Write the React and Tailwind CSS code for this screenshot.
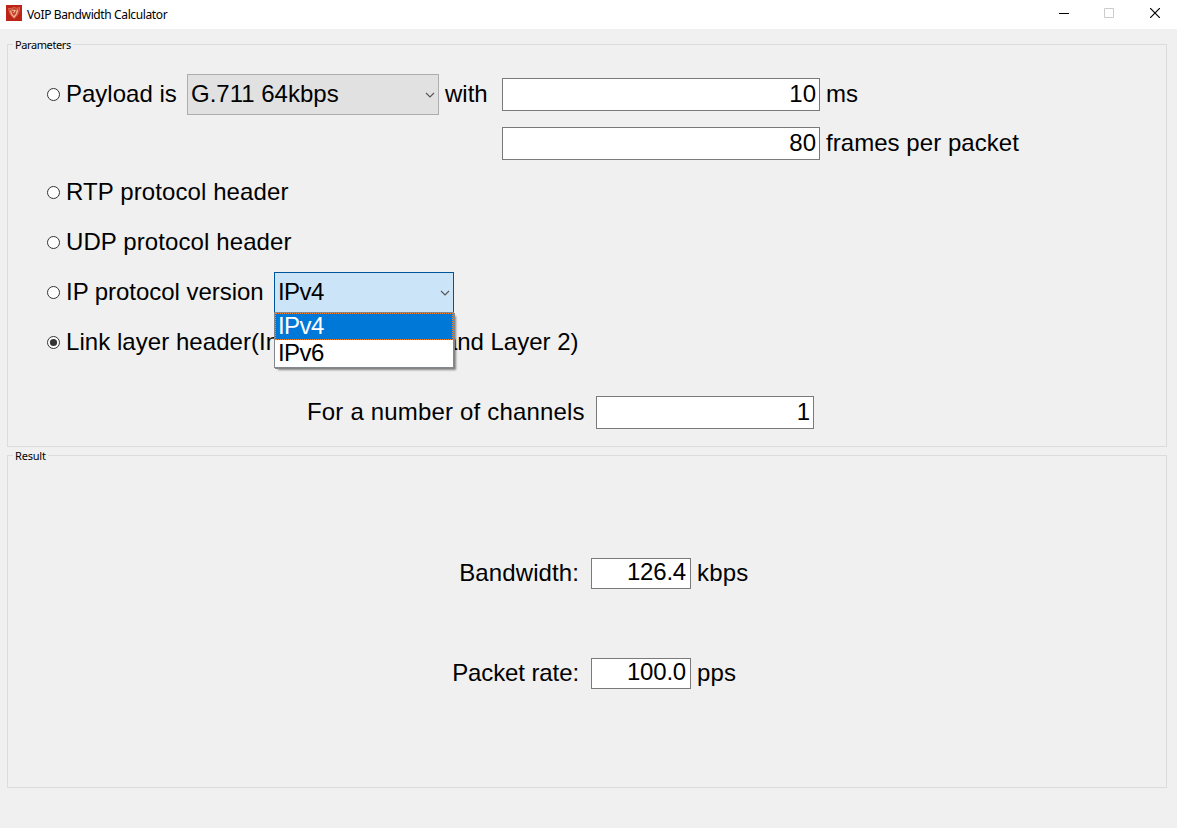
import React from "react";

const Chevron = ({ className = "" }) => (
  <svg className={"h-[6px] w-[10px] shrink-0 " + className} viewBox="0 0 10 6" fill="none" stroke="#555" strokeWidth="1.1">
    <path d="M1 1l4 4 4-4" />
  </svg>
);

const Text = ({ className = "", children }) => (
  <span className={"-mt-[2px] whitespace-nowrap leading-[28px] " + className}>{children}</span>
);

const Radio = ({ checked }) => (
  <svg className="mr-[6px] h-[13px] w-[13px] shrink-0" viewBox="0 0 13 13">
    <circle cx="6.5" cy="6.5" r="6" fill="#fff" stroke="#333" />
    {checked && <circle cx="6.5" cy="6.5" r="3.6" fill="#333" />}
  </svg>
);

const Field = ({ className = "", children }) => (
  <div className={"flex shrink-0 items-start justify-end border border-[#7a7a7a] bg-white " + className}>
    {children}
  </div>
);

const Group = ({ title, titleClass = "", className = "", children }) => (
  <section className={"relative ml-[7px] w-[1160px] border border-[#dcdcdc] " + className}>
    <span className={"absolute -top-[7px] left-[5px] bg-[#f0f0f0] px-[2px] font-['Noto_Sans',sans-serif] text-[11px] leading-[14px] " + titleClass}>
      {title}
    </span>
    {children}
  </section>
);

export default function App() {
  return (
    <div className="flex h-[828px] w-[1177px] flex-col overflow-hidden bg-[#f0f0f0] font-['Liberation_Sans',Arial,sans-serif] text-[24px] text-black">
      <header className="flex h-[29px] shrink-0 items-start bg-white">
        <svg className="mt-[5px] ml-[6px] h-4 w-4" viewBox="0 0 16 16">
          <path fill="#bd2418" d="M0 0h16v16H0z" />
          <path d="M2.500 3.500q3 .5 5.500-1 2.500 1.500 5.500 0 .5 6-5.500 11-5-4-5.500-10z" fill="#c4402c" stroke="#dc7a5c" strokeWidth=".8" />
          <path d="M4.500 5.500q.5 4 3.500 6.500 3-2.500 3.500-7.500" fill="none" stroke="#f3b596" strokeWidth="1.300" />
          <path d="M5.500 5l3.500.5M7.500 8l2-3" fill="none" stroke="#f0c8a4" />
        </svg>
        <span className="mt-[6px] ml-[5px] font-['Noto_Sans',sans-serif] text-[12px] leading-[17px] tracking-[-0.38px]">VoIP Bandwidth Calculator</span>
        <div className="mt-[8px] mr-[17px] ml-auto flex gap-[35px]">
          <svg className="h-[10px] w-[10px]" viewBox="0 0 10 10"><path d="M0 5.500h10" stroke="#000" /></svg>
          <svg className="h-[10px] w-[10px]" viewBox="0 0 10 10"><path d="M.5.5h9v9h-9z" fill="none" stroke="#ccc" /></svg>
          <svg className="ml-px h-[10px] w-[10px]" viewBox="0 0 10 10"><path d="M0 0l10 10M10 0L0 10" stroke="#000" strokeWidth="1.200" /></svg>
        </div>
      </header>

      <Group title="Parameters" titleClass="tracking-[-0.4px]" className="mt-[15px] h-[403px] shrink-0 pl-[39px]">
        <div className="mt-[29px] flex h-[41px] items-center">
          <Radio />
          <Text className="w-[121px]">Payload is</Text>
          <div className="flex h-[41px] w-[252px] items-center border border-[#adadad] bg-[#e1e1e1] pr-[3px] pl-[3px]">
            <Text>G.711 64kbps</Text>
            <Chevron className="ml-auto" />
          </div>
          <Text className="ml-[6px] w-[57px]">with</Text>
          <Field className="h-[33px] w-[318px] pr-[3px] leading-[30px]">10</Field>
          <Text className="ml-[6px]">ms</Text>
        </div>
        <div className="mt-[12px] flex h-[33px] items-center pl-[455px]">
          <Field className="h-[33px] w-[318px] pr-[3px] leading-[30px]">80</Field>
          <Text className="ml-[6px] tracking-[0.05px]">frames per packet</Text>
        </div>
        <div className="mt-[12px] flex h-[41px] items-center">
          <Radio />
          <Text className="tracking-[0.1px]">RTP protocol header</Text>
        </div>
        <div className="mt-[9px] flex h-[41px] items-center">
          <Radio />
          <Text className="tracking-[0.1px]">UDP protocol header</Text>
        </div>
        <div className="mt-[9px] flex h-[41px] items-center">
          <Radio />
          <Text className="w-[208px] tracking-[-0.04px]">IP protocol version</Text>
          <div className="relative flex h-[41px] w-[180px] items-center border border-[#005499] bg-[#cce4f7] pr-[3px] pl-[3px]">
            <Text className="tracking-[-0.6px]">IPv4</Text>
            <Chevron className="ml-auto" />
            <div className="absolute top-[39px] -left-px z-10 w-[180px] border border-[#83878e] bg-white tracking-[-0.6px] shadow-[1px_1px_0_#858585,3px_3px_2px_-1px_rgba(0,0,0,0.45)]">
              <div className="h-[27px] border border-dotted border-[#ff8728] bg-[#0078d7] pl-[2px] leading-[23px] text-white">IPv4</div>
              <div className="h-[27px] pl-[3px] leading-[25px]">IPv6</div>
            </div>
          </div>
        </div>
        <div className="mt-[9px] flex h-[41px] items-center">
          <Radio checked />
          <Text>
            <span className="tracking-[0.05px]">Link layer header(In</span>
            <span className="tracking-[-0.28px]">cluding Layer 1 a</span>
            <span>nd Layer 2)</span>
          </Text>
        </div>
        <div className="mt-[33px] flex h-[33px] items-center pl-[260px]">
          <Text className="w-[289px] tracking-[0.18px]">For a number of channels</Text>
          <Field className="h-[33px] w-[218px] pr-[3px] leading-[30px]">1</Field>
        </div>
      </Group>

      <Group title="Result" titleClass="tracking-[-0.2px]" className="mt-[8px] h-[333px] shrink-0">
        <div className="mt-[102px] flex h-[31px] items-center">
          <Text className="w-[571px] text-right tracking-[0.1px]">Bandwidth:</Text>
          <Field className="ml-[12px] h-[31px] w-[100px] pr-[4px] leading-[26px] tracking-[-0.2px]">126.4</Field>
          <Text className="ml-[6px] tracking-[0.2px]">kbps</Text>
        </div>
        <div className="mt-[69px] flex h-[31px] items-center">
          <Text className="w-[571px] text-right tracking-[-0.1px]">Packet rate:</Text>
          <Field className="ml-[12px] h-[31px] w-[100px] pr-[4px] leading-[26px] tracking-[-0.2px]">100.0</Field>
          <Text className="ml-[6px] tracking-[0.2px]">pps</Text>
        </div>
      </Group>
    </div>
  );
}
